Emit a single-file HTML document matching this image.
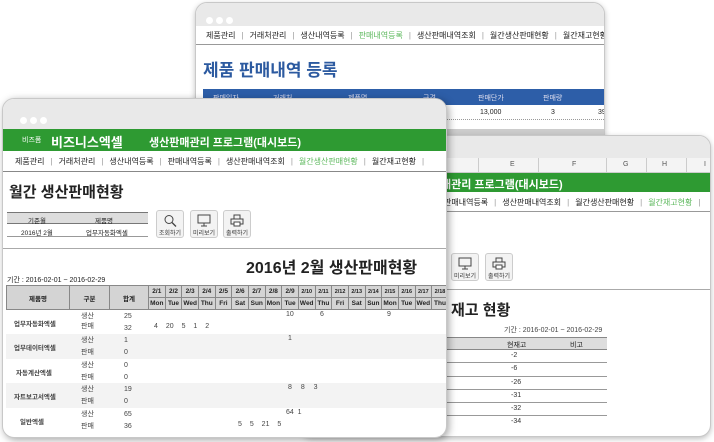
<!DOCTYPE html><html><head><meta charset="utf-8"><style>
*{margin:0;padding:0;box-sizing:border-box}
body{width:714px;height:442px;background:#fff;position:relative;overflow:hidden;font-family:"Liberation Sans","Noto Sans CJK KR",sans-serif;color:#222}
.abs{position:absolute}
.win{position:absolute;background:#fff;border:1px solid #c8c8c8;border-radius:12px;overflow:hidden;box-shadow:0 2px 6px rgba(0,0,0,.25)}
.tb{background:#e9e9e9;position:absolute;left:0;right:0;top:0}
.dots span{display:inline-block;width:7px;height:7px;border-radius:50%;background:#fff;margin-right:3px}
.nav{position:absolute;font-size:8px;white-space:nowrap;color:#222}
.nav i{font-style:normal;color:#999;margin:0 6px}
.nav b{font-weight:normal}
.g{color:#5cb85c}
table{border-collapse:collapse}
.btn{position:absolute;width:28px;height:28px;border:1px solid #ccc;border-radius:3px;background:#f3f3f3;font-size:6px;text-align:center;color:#333}
.btn svg{display:block;margin:3px auto 1px}
</style></head><body>

<!-- back top window -->
<div class="win" style="left:195px;top:2px;width:410px;height:150px">
 <div class="tb" style="height:23px"><div class="dots abs" style="left:10px;top:8px"><span></span><span></span><span></span></div></div>
 <div class="nav" style="left:10px;top:27px">제품관리<i>|</i>거래처관리<i>|</i>생산내역등록<i>|</i><span class="g">판매내역등록</span><i>|</i>생산판매내역조회<i>|</i>월간생산판매현황<i>|</i>월간재고현황</div>
 <div class="abs" style="left:0;right:0;top:41px;border-top:1px solid #999"></div>
 <div class="abs" style="left:7px;top:53px;font-size:17px;font-weight:bold;color:#2c5aa0">제품 판매내역 등록</div>
 <div class="abs" style="left:7px;top:86px;width:403px;height:16px;background:#2d5ea8;color:#dde;font-size:7px">
  <span class="abs" style="left:10px;top:4px">판매일자</span><span class="abs" style="left:70px;top:4px">거래처</span><span class="abs" style="left:145px;top:4px">제품명</span><span class="abs" style="left:220px;top:4px">규격</span><span class="abs" style="left:275px;top:4px">판매단가</span><span class="abs" style="left:340px;top:4px">판매량</span></div>
 <div class="abs" style="left:7px;top:102px;width:403px;height:15px;border-bottom:1px dotted #999;font-size:7px">
  <span class="abs" style="left:277px;top:4px">13,000</span><span class="abs" style="left:348px;top:4px">3</span><span class="abs" style="left:395px;top:4px">39,</span></div>
 <div class="abs" style="left:7px;top:126px;width:403px;height:12px;background:#ccc"></div>
</div>

<!-- right window -->
<div class="win" style="left:300px;top:135px;width:411px;height:302px">
 <div class="tb" style="height:22px"></div>
 <div class="abs" style="left:0;right:0;top:22px;height:15px;background:#f4f4f4;border-bottom:1px solid #ccc;font-size:7px;color:#555">
  <span class="abs" style="left:177px;top:3px;border-left:1px solid #ccc;height:15px;top:0"></span>
  <span class="abs" style="left:209px;top:3px">E</span><span class="abs" style="left:237px;top:0;border-left:1px solid #ccc;height:15px"></span>
  <span class="abs" style="left:271px;top:3px">F</span><span class="abs" style="left:305px;top:0;border-left:1px solid #ccc;height:15px"></span>
  <span class="abs" style="left:322px;top:3px">G</span><span class="abs" style="left:345px;top:0;border-left:1px solid #ccc;height:15px"></span>
  <span class="abs" style="left:361px;top:3px">H</span><span class="abs" style="left:385px;top:0;border-left:1px solid #ccc;height:15px"></span>
  <span class="abs" style="left:403px;top:3px">I</span></div>
 <div class="abs" style="left:0;right:0;top:37px;height:19px;background:#2e9a32;color:#fff;font-size:11px;font-weight:bold"><span class="abs" style="left:140px;top:3px">매관리 프로그램(대시보드)</span></div>
 <div class="nav" style="left:143px;top:61px">판매내역등록<i>|</i>생산판매내역조회<i>|</i>월간생산판매현황<i>|</i><span class="g">월간재고현황</span><i>|</i></div>
 <div class="abs" style="left:0;right:0;top:75px;border-top:1px solid #999"></div>
 <div class="btn" style="left:150px;top:117px"><svg width="14" height="13" viewBox="0 0 14 13"><rect x="1" y="1" width="12" height="8" fill="none" stroke="#444"/><path d="M7 9v3M4 12h6" stroke="#444"/></svg>미리보기</div>
 <div class="btn" style="left:184px;top:117px"><svg width="14" height="13" viewBox="0 0 14 13"><rect x="4" y="1" width="6" height="4" fill="none" stroke="#444"/><rect x="1" y="5" width="12" height="5" fill="none" stroke="#444"/><rect x="4" y="8" width="6" height="4" fill="#fff" stroke="#444"/></svg>출력하기</div>
 <div class="abs" style="left:0;right:0;top:153px;border-top:1px solid #aaa"></div>
 <div class="abs" style="left:150px;top:163px;font-size:15px;font-weight:bold">재고 현황</div>
 <div class="abs" style="left:203px;top:189px;font-size:7px;color:#444">기간 : 2016-02-01 ~ 2016-02-29</div>
 <div class="abs" style="left:146px;top:201px;width:160px;height:13px;background:#ddd;border-top:1px solid #888;border-bottom:1px solid #888;font-size:7px"><span class="abs" style="left:60px;top:2px">현재고</span><span class="abs" style="left:123px;top:2px">비고</span></div>
 <div class="abs" style="left:146px;top:214px;width:160px;font-size:7px;line-height:12.3px;color:#333">
  <div style="border-bottom:1px solid #999;padding-left:64px">-2</div><div style="border-bottom:1px solid #999;padding-left:64px">-6</div><div style="border-bottom:1px solid #999;padding-left:64px">-26</div><div style="border-bottom:1px solid #999;padding-left:64px">-31</div><div style="border-bottom:1px solid #999;padding-left:64px">-32</div><div style="padding-left:64px">-34</div></div>
</div>

<!-- front window -->
<div class="win" style="left:2px;top:98px;width:445px;height:340px;box-shadow:2px 2px 8px rgba(0,0,0,.35)">
 <div class="tb" style="height:30px"><div class="dots abs" style="left:17px;top:12px"><span></span><span></span><span></span></div></div>
 <div class="abs" style="left:0;right:0;top:30px;height:22px;background:#2e9a32;color:#fff;font-weight:bold">
  <span class="abs" style="left:19px;top:6px;font-size:7px;font-weight:normal">비즈폼</span>
  <span class="abs" style="left:48px;top:3px;font-size:13px">비즈니스엑셀</span>
  <span class="abs" style="left:146px;top:5px;font-size:11px">생산판매관리 프로그램(대시보드)</span></div>
 <div class="nav" style="left:12px;top:57px">제품관리<i>|</i>거래처관리<i>|</i>생산내역등록<i>|</i>판매내역등록<i>|</i>생산판매내역조회<i>|</i><span class="g">월간생산판매현황</span><i>|</i>월간재고현황<i>|</i></div>
 <div class="abs" style="left:0;right:0;top:72px;border-top:1px solid #888"></div>
 <div class="abs" style="left:6px;top:82px;font-size:15px;font-weight:bold">월간 생산판매현황</div>
 <div class="abs" style="left:4px;top:113px;width:141px;height:12px;background:#ddd;border-top:1px solid #777;border-bottom:1px solid #777;font-size:6.5px"><span class="abs" style="left:21px;top:2px">기준월</span><span class="abs" style="left:88px;top:2px">제품명</span></div>
 <div class="abs" style="left:4px;top:125px;width:141px;height:13px;border-bottom:1px solid #999;font-size:6.5px"><span class="abs" style="left:14px;top:3px">2016년 2월</span><span class="abs" style="left:79px;top:3px">업무자동화엑셀</span></div>
 <div class="btn" style="left:153px;top:111px"><svg width="14" height="13" viewBox="0 0 14 13"><circle cx="6" cy="5.5" r="4" fill="none" stroke="#444"/><path d="M9 8.5l4 4" stroke="#444" stroke-width="1.3"/></svg>조회하기</div>
 <div class="btn" style="left:187px;top:111px"><svg width="14" height="13" viewBox="0 0 14 13"><rect x="1" y="1" width="12" height="8" fill="none" stroke="#444"/><path d="M7 9v3M4 12h6" stroke="#444"/></svg>미리보기</div>
 <div class="btn" style="left:220px;top:111px"><svg width="14" height="13" viewBox="0 0 14 13"><rect x="4" y="1" width="6" height="4" fill="none" stroke="#444"/><rect x="1" y="5" width="12" height="5" fill="none" stroke="#444"/><rect x="4" y="8" width="6" height="4" fill="#fff" stroke="#444"/></svg>출력하기</div>
 <div class="abs" style="left:0;right:0;top:149px;border-top:1px solid #aaa"></div>
 <div class="abs" style="left:243px;top:155px;font-size:16px;font-weight:bold">2016년 2월 생산판매현황</div>
 <div class="abs" style="left:4px;top:176px;font-size:7px">기간 : 2016-02-01 ~ 2016-02-29</div>
 <table class="abs" style="left:3px;top:186px;font-size:6.5px;table-layout:fixed;width:442px">
  <colgroup><col style="width:63px"><col style="width:40px"><col style="width:39px"><col span="18" style="width:16.67px"></colgroup>
  <tr style="height:12px;background:#d4d4d4;font-weight:bold;text-align:center">
   <td rowspan="2" style="border:1px solid #888">제품명</td><td rowspan="2" style="border:1px solid #888">구분</td><td rowspan="2" style="border:1px solid #888">합계</td>
   <td style="border:1px solid #888">2/1</td><td style="border:1px solid #888">2/2</td><td style="border:1px solid #888">2/3</td><td style="border:1px solid #888">2/4</td><td style="border:1px solid #888">2/5</td><td style="border:1px solid #888">2/6</td><td style="border:1px solid #888">2/7</td><td style="border:1px solid #888">2/8</td><td style="border:1px solid #888">2/9</td><td style="border:1px solid #888;font-size:5.5px">2/10</td><td style="border:1px solid #888;font-size:5.5px">2/11</td><td style="border:1px solid #888;font-size:5.5px">2/12</td><td style="border:1px solid #888;font-size:5.5px">2/13</td><td style="border:1px solid #888;font-size:5.5px">2/14</td><td style="border:1px solid #888;font-size:5.5px">2/15</td><td style="border:1px solid #888;font-size:5.5px">2/16</td><td style="border:1px solid #888;font-size:5.5px">2/17</td><td style="border:1px solid #888;font-size:5.5px">2/18</td></tr>
  <tr style="height:12px;background:#d4d4d4;font-weight:bold;text-align:center">
   <td style="border:1px solid #888">Mon</td><td style="border:1px solid #888">Tue</td><td style="border:1px solid #888">Wed</td><td style="border:1px solid #888">Thu</td><td style="border:1px solid #888">Fri</td><td style="border:1px solid #888">Sat</td><td style="border:1px solid #888">Sun</td><td style="border:1px solid #888">Mon</td><td style="border:1px solid #888">Tue</td><td style="border:1px solid #888">Wed</td><td style="border:1px solid #888">Thu</td><td style="border:1px solid #888">Fri</td><td style="border:1px solid #888">Sat</td><td style="border:1px solid #888">Sun</td><td style="border:1px solid #888">Mon</td><td style="border:1px solid #888">Tue</td><td style="border:1px solid #888">Wed</td><td style="border:1px solid #888">Thu</td></tr>
 </table>
 <div class="abs" style="left:3px;top:211px;width:442px;font-size:7px;color:#444">
  <div style="position:relative;height:24.4px"><b class="abs" style="left:8px;top:8px;font-size:6.5px">업무자동화엑셀</b><span class="abs" style="left:75px;top:1px">생산<br>판매</span><span class="abs" style="left:118px;top:1px;line-height:12px">25<br>32</span><span class="abs" style="left:280px;top:1px">10</span><span class="abs" style="left:314px;top:1px">6</span><span class="abs" style="left:381px;top:1px">9</span><span class="abs" style="left:148px;top:13px;word-spacing:6px">4 20 5 1 2</span></div>
  <div style="position:relative;height:24.4px;background:#f3f3f3"><b class="abs" style="left:8px;top:8px;font-size:6.5px">업무데이터엑셀</b><span class="abs" style="left:75px;top:1px;line-height:12px">생산<br>판매</span><span class="abs" style="left:118px;top:1px;line-height:12px">1<br>0</span><span class="abs" style="left:282px;top:1px">1</span></div>
  <div style="position:relative;height:24.4px"><b class="abs" style="left:10px;top:8px;font-size:6.5px">자동계산엑셀</b><span class="abs" style="left:75px;top:1px;line-height:12px">생산<br>판매</span><span class="abs" style="left:118px;top:1px;line-height:12px">0<br>0</span></div>
  <div style="position:relative;height:24.4px;background:#f3f3f3"><b class="abs" style="left:8px;top:8px;font-size:6.5px">자트보고서엑셀</b><span class="abs" style="left:75px;top:1px;line-height:12px">생산<br>판매</span><span class="abs" style="left:118px;top:1px;line-height:12px">19<br>0</span><span class="abs" style="left:282px;top:1px;word-spacing:7px">8 8 3</span></div>
  <div style="position:relative;height:24.4px"><b class="abs" style="left:14px;top:8px;font-size:6.5px">일반엑셀</b><span class="abs" style="left:75px;top:1px;line-height:12px">생산<br>판매</span><span class="abs" style="left:118px;top:1px;line-height:12px">65<br>36</span><span class="abs" style="left:280px;top:1px">64 &nbsp;1</span><span class="abs" style="left:232px;top:13px;word-spacing:6px">5 5 21 5</span></div>
 </div>
</div>
</body></html>
